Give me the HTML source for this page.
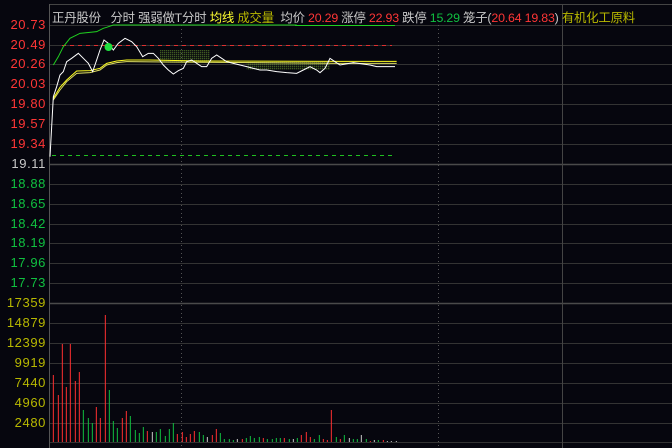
<!DOCTYPE html><html><head><style>
body{margin:0;background:#06060e;width:672px;height:448px;overflow:hidden;position:relative;font-family:"Liberation Sans","Noto Sans CJK SC",sans-serif}
.l{position:absolute;right:626px;font-size:13px;letter-spacing:0.6px;line-height:14px;text-align:right;width:48px}
.h{position:absolute;top:8px;left:52px;font-size:12.4px;white-space:nowrap;color:#c8c8c8;letter-spacing:-0.2px}
.r{color:#ff3636}.g{color:#10c040}.y{color:#ffff30}.o{color:#b8b800}
</style></head><body>
<svg width="672" height="448" style="position:absolute;left:0;top:0">
<defs><pattern id="dp" width="2" height="2" patternUnits="userSpaceOnUse"><rect width="1" height="1" fill="#6a9a30"/></pattern></defs>
<g stroke="#333" stroke-width="1">
<line x1="49" y1="4.5" x2="672" y2="4.5" stroke="#444"/>
<line x1="49" y1="25.5" x2="672" y2="25.5"/><line x1="49" y1="45.5" x2="672" y2="45.5"/><line x1="49" y1="64.5" x2="672" y2="64.5"/><line x1="49" y1="84.5" x2="672" y2="84.5"/><line x1="49" y1="104.5" x2="672" y2="104.5"/><line x1="49" y1="124.5" x2="672" y2="124.5"/><line x1="49" y1="144.5" x2="672" y2="144.5"/>
<line x1="49" y1="164.5" x2="672" y2="164.5" stroke="#4a4a4a" stroke-width="1.5"/>
<line x1="49" y1="184.5" x2="672" y2="184.5"/><line x1="49" y1="204.5" x2="672" y2="204.5"/><line x1="49" y1="224.5" x2="672" y2="224.5"/><line x1="49" y1="243.5" x2="672" y2="243.5"/><line x1="49" y1="263.5" x2="672" y2="263.5"/><line x1="49" y1="283.5" x2="672" y2="283.5"/>
<line x1="49" y1="303.5" x2="672" y2="303.5" stroke="#4a4a4a" stroke-width="1.5"/>
<line x1="49" y1="323.5" x2="672" y2="323.5"/><line x1="49" y1="343.5" x2="672" y2="343.5"/><line x1="49" y1="363.5" x2="672" y2="363.5"/><line x1="49" y1="383.5" x2="672" y2="383.5"/><line x1="49" y1="403.5" x2="672" y2="403.5"/><line x1="49" y1="423.5" x2="672" y2="423.5"/><line x1="49" y1="442.5" x2="672" y2="442.5"/>
<line x1="49.5" y1="4" x2="49.5" y2="448" stroke="#555"/>
<line x1="562.5" y1="4" x2="562.5" y2="448" stroke="#444"/>
<line x1="181.5" y1="25" x2="181.5" y2="448" stroke="#555" stroke-dasharray="1,3"/>
<line x1="438.5" y1="25" x2="438.5" y2="448" stroke="#555" stroke-dasharray="1,3"/>
</g>
<line x1="62" y1="45.5" x2="392" y2="45.5" stroke="#e03030" stroke-dasharray="4,4"/>
<line x1="52" y1="155.5" x2="392" y2="155.5" stroke="#20c020" stroke-dasharray="4,4"/>
<line x1="295" y1="25.5" x2="395" y2="25.5" stroke="#20d020"/>
<g transform="scale(0.33333)" fill="none" stroke-width="3">
<rect x="480" y="150" width="150" height="38" fill="url(#dp)" stroke="none"/>
<rect x="740" y="185" width="250" height="25" fill="url(#dp)" stroke="none"/>
<polyline stroke="#20d020" points="160,195 175,170 190,140 210,115 240,100 290,95 310,85 320,82 340,75 890,75"/>
<polyline stroke="#e0e060" points="160,300 180,270 200,245 230,220 270,218 300,210 320,195 350,188 380,185 500,186 1020,190 1190,190"/>
<polyline stroke="#ffff20" points="160,295 180,262 200,240 230,213 270,212 300,205 320,190 350,183 380,180 450,180 600,183 1020,184 1190,184"/>
<polyline stroke="#ffffff" points="150,470 160,290 170,260 180,225 190,215 200,185 215,175 235,160 250,175 265,190 278,215 290,180 300,150 312,120 325,130 340,150 355,130 375,115 395,125 410,140 428,170 445,160 460,160 475,175 490,195 505,210 520,222 535,212 550,205 560,185 575,180 590,190 605,200 620,200 635,175 650,165 665,175 680,185 700,190 720,195 740,200 760,205 780,210 800,210 830,215 860,218 890,220 910,210 930,200 950,210 960,218 975,205 990,175 1005,185 1020,195 1060,188 1110,195 1130,200 1185,200"/>
</g>
<circle cx="108.5" cy="47" r="4" fill="#20e040"/>
<g transform="translate(0,290) scale(0.33333)" stroke-width="3" id="v"></g>
</svg>
<div class="h">正丹股份 &nbsp; 分时 强弱做T分时 <span class="y">均线</span> <span class="o">成交量</span> &nbsp;均价 <span class="r">20.29</span> 涨停 <span class="r">22.93</span> 跌停 <span class="g">15.29</span> 笼子(<span class="r">20.64 19.83</span>) <span class="o">有机化工原料</span></div>
<div class="l r" style="top:18px">20.73</div><div class="l r" style="top:38px">20.49</div><div class="l r" style="top:57px">20.26</div><div class="l r" style="top:77px">20.03</div><div class="l r" style="top:97px">19.80</div><div class="l r" style="top:117px">19.57</div><div class="l r" style="top:137px">19.34</div>
<div class="l" style="top:157px;color:#c8c8c8">19.11</div>
<div class="l g" style="top:177px">18.88</div><div class="l g" style="top:197px">18.65</div><div class="l g" style="top:217px">18.42</div><div class="l g" style="top:236px">18.19</div><div class="l g" style="top:256px">17.96</div><div class="l g" style="top:276px">17.73</div>
<div class="l o" style="top:296px">17359</div><div class="l o" style="top:316px">14879</div><div class="l o" style="top:336px">12399</div><div class="l o" style="top:356px">9919</div><div class="l o" style="top:376px">7440</div><div class="l o" style="top:396px">4960</div><div class="l o" style="top:416px">2480</div>
<script>
var d="160,255,r;175,315,r;187,162,r;199,291,r;211,162,r;226,273,r;238,246,r;250,360,g;265,384,g;277,399,g;289,351,r;301,384,r;316,75,r;328,300,g;340,393,g;352,414,g;367,384,r;379,363,r;391,378,g;406,420,g;418,429,g;430,411,g;442,423,r;457,426,w;469,426,g;481,417,g;496,438,g;508,417,g;520,399,g;532,432,r;547,426,r;559,441,r;571,432,r;583,423,r;598,426,g;610,435,g;622,441,w;637,435,r;649,417,r;661,429,g;673,447,g;688,447,g;700,450,g;712,447,w;727,447,r;739,444,g;751,438,g;763,444,g;778,441,g;790,444,r;802,447,g;817,447,g;829,444,g;841,444,g;853,444,r;868,447,g;880,447,w;892,444,g;904,435,r;919,426,r;931,441,r;943,447,g;958,435,g;970,447,r;982,450,r;994,360,r;1009,441,g;1021,447,r;1033,435,g;1048,444,w;1060,447,g;1072,447,g;1084,435,w;1099,447,g;1111,453,r;1123,450,w;1135,450,g;1150,450,r;1162,453,w;1174,453,w;1189,453,w";
var c={r:"#ff3030",g:"#10c040",w:"#c8c8c8"},s="";
d.split(";").forEach(function(e){var p=e.split(",");s+='<line x1="'+p[0]+'" x2="'+p[0]+'" y1="'+p[1]+'" y2="456" stroke="'+c[p[2]]+'"/>';});
document.getElementById("v").innerHTML=s;
</script>
</body></html>
